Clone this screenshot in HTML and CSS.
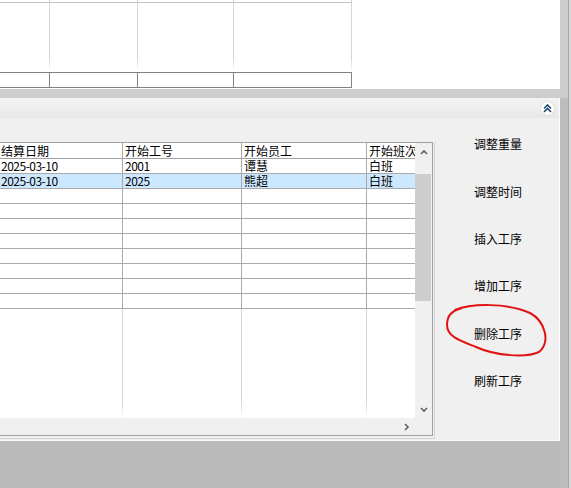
FILE: index.html
```html
<!DOCTYPE html>
<html lang="zh-CN">
<head>
    <meta charset="UTF-8">
    <title>工序</title>
    <link rel="stylesheet" href="styles.css">
</head>
<body>
    <div class="window">
        <div class="main">
            <div class="top">
                <div class="top-grid">
                    <div class="tg-row tg-head"><div></div><div></div><div></div><div></div></div>
                    <div class="tg-row tg-body"><div></div><div></div><div></div><div></div></div>
                    <div class="tg-row tg-foot"><div></div><div></div><div></div><div></div></div>
                </div>
            </div>
            <div class="band"></div>
            <div class="panel">
                <div class="panel-head">
                    <span class="collapse">
                        <svg width="9" height="9" viewBox="0 0 9 9"><path d="M1 4.5 L4.5 1 L8 4.5 M1 8 L4.5 4.5 L8 8" fill="none" stroke="#1d4a72" stroke-width="1.6"/></svg>
                    </span>
                </div>
                <div class="panel-body">
                    <div class="grid-wrap">
                        <div class="grid">
                            <div class="grid-main">
                                <div class="cells">
                                    <div class="row head"><div>结算日期</div><div>开始工号</div><div>开始员工</div><div>开始班次</div></div>
                                    <div class="row"><div class="num">2025-03-10</div><div class="num">2001</div><div>谭慧</div><div>白班</div></div>
                                    <div class="row sel"><div class="num">2025-03-10</div><div class="num">2025</div><div>熊超</div><div>白班</div></div>
                                    <div class="row"><div></div><div></div><div></div><div></div></div>
                                    <div class="row"><div></div><div></div><div></div><div></div></div>
                                    <div class="row"><div></div><div></div><div></div><div></div></div>
                                    <div class="row"><div></div><div></div><div></div><div></div></div>
                                    <div class="row"><div></div><div></div><div></div><div></div></div>
                                    <div class="row"><div></div><div></div><div></div><div></div></div>
                                    <div class="row"><div></div><div></div><div></div><div></div></div>
                                    <div class="row"><div></div><div></div><div></div><div></div></div>
                                    <div class="row filler"><div></div><div></div><div></div><div></div></div>
                                </div>
                                <div class="vscroll">
                                    <div class="sb-btn">
                                        <svg width="8" height="6" viewBox="0 0 8 6"><path d="M1 5 L4 2 L7 5" fill="none" stroke="#606060" stroke-width="1.6"/></svg>
                                    </div>
                                    <div class="sb-track"><div class="thumb"></div></div>
                                    <div class="sb-btn">
                                        <svg width="8" height="6" viewBox="0 0 8 6"><path d="M1 1 L4 4 L7 1" fill="none" stroke="#606060" stroke-width="1.6"/></svg>
                                    </div>
                                </div>
                            </div>
                            <div class="hscroll">
                                <div class="hs-track"></div>
                                <div class="sb-btn">
                                    <svg width="6" height="8" viewBox="0 0 6 8"><path d="M1 1 L4 4 L1 7" fill="none" stroke="#606060" stroke-width="1.6"/></svg>
                                </div>
                                <div class="corner"></div>
                            </div>
                        </div>
                    </div>
                    <div class="actions">
                        <div class="action">调整重量</div>
                        <div class="action">调整时间</div>
                        <div class="action">插入工序</div>
                        <div class="action">增加工序</div>
                        <div class="action">删除工序</div>
                        <div class="action">刷新工序</div>
                    </div>
                </div>
            </div>
        </div>
        <div class="edge"></div>
        <svg class="mark" width="571" height="488" viewBox="0 0 571 488">
            <path d="M455 310 C472 303, 508 303, 530 313 C545 321, 551 342, 539 352 C526 358, 496 356, 476 347 C461 341, 447 337, 447 325 C447 316, 451 311, 462 308" fill="none" stroke="#e01414" stroke-width="2" stroke-linecap="round"/>
        </svg>
    </div>
</body>
</html>
```

FILE: styles.css
```css
* {
    box-sizing: border-box;
}
body {
    margin: 0;
    background-color: #bababa;
    font-family: "Noto Sans CJK SC", sans-serif;
    font-size: 12px;
    color: #000;
    overflow: hidden;
}
.window {
    display: flex;
    height: 488px;
    position: relative;
}
.main {
    width: 560px;
    display: flex;
    flex-direction: column;
}
.edge {
    width: 11px;
    background:
        linear-gradient(to right, transparent 8px, #a4a4a4 8px, #a4a4a4 9px, #d8d8d8 9px),
        linear-gradient(#cdcdcd 98px, #bdbdbd 98px);
}

/* upper grid */
.top {
    height: 89px;
    background-color: #fff;
    overflow: hidden;
}
.top-grid {
    width: 353px;
    margin-left: -1px;
}
.tg-row {
    display: grid;
    grid-template-columns: 51px 88px 96px 118px;
}
.tg-head div {
    height: 3px;
    border-bottom: 1px solid #c4c4c4;
    border-right: 1px solid #d4d4d4;
}
.tg-body div {
    height: 69px;
    background: linear-gradient(#d6d6d6 80%, #fff) no-repeat right top / 1px 100%;
}
.tg-foot {
    border-top: 1px solid #808080;
    border-bottom: 1px solid #808080;
}
.tg-foot div {
    height: 14px;
    border-right: 1px solid #808080;
}
.band {
    height: 9px;
    background-color: #cdcdcd;
}

/* lower panel */
.panel {
    height: 343px;
    background-color: #f0f0f0;
    border-right: 1px solid #fbfbfb;
    border-bottom: 1px solid #fbfbfb;
    display: flex;
    flex-direction: column;
}
.panel-head {
    height: 20px;
    background: linear-gradient(#f3f3f3, #e8e8e8);
    display: flex;
    align-items: center;
    justify-content: flex-end;
    padding-right: 5px;
}
.collapse {
    width: 13px;
    height: 13px;
    border-radius: 50%;
    background-color: #fff;
    box-shadow: 0 0 2px rgba(235, 170, 110, 0.7);
    display: flex;
    align-items: center;
    justify-content: center;
}
.panel-body {
    flex: 1;
    display: flex;
}
.grid-wrap {
    margin-top: 24px;
    margin-left: -2px;
    width: 437px;
    height: 297px;
    padding: 0 1px 2px 0;
    border-right: 1px solid #d4d4d4;
    border-bottom: 1px solid #d4d4d4;
}
.grid {
    width: 435px;
    height: 294px;
    border: 1px solid #a0a0a0;
    background-color: #fff;
    display: flex;
    flex-direction: column;
}
.grid-main {
    flex: 1;
    display: flex;
    min-height: 0;
}
.cells {
    width: 416px;
    overflow: hidden;
    display: flex;
    flex-direction: column;
}
.row {
    display: grid;
    grid-template-columns: 124px 119px 125px 100px;
    width: 468px;
}
.row > div {
    height: 15px;
    line-height: 14px;
    padding-left: 2px;
    border-right: 1px solid #aaaaaa;
    border-bottom: 1px solid #aaaaaa;
    white-space: nowrap;
}
.row.head > div {
    height: 16px;
    line-height: 15px;
    border-bottom-color: #a0a0a0;
}
.row.sel > div {
    background-color: #cce8ff;
}
.num {
    letter-spacing: -0.5px;
}
.row.filler {
    flex: 1;
}
.row.filler > div {
    height: auto;
    border-bottom: none;
    border-right: none;
    background: linear-gradient(#d4d4d4 85%, #fff) no-repeat right top / 1px 100%;
}
.vscroll {
    width: 17px;
    background-color: #f0f0f0;
    display: flex;
    flex-direction: column;
}
.sb-btn {
    width: 17px;
    height: 17px;
    display: flex;
    align-items: center;
    justify-content: center;
}
.sb-track {
    flex: 1;
    padding: 14px 1px 0 0;
}
.thumb {
    height: 127px;
    background-color: #cdcdcd;
}
.hscroll {
    height: 17px;
    display: flex;
    background-color: #f0f0f0;
}
.hs-track {
    width: 399px;
}
.corner {
    width: 17px;
}

/* buttons */
.actions {
    width: 124px;
    padding: 2px 0 0 2px;
    display: flex;
    flex-direction: column;
}
.action {
    height: 47.4px;
    display: flex;
    align-items: center;
    justify-content: center;
}
.mark {
    position: absolute;
    left: 0;
    top: 0;
    pointer-events: none;
}
```
